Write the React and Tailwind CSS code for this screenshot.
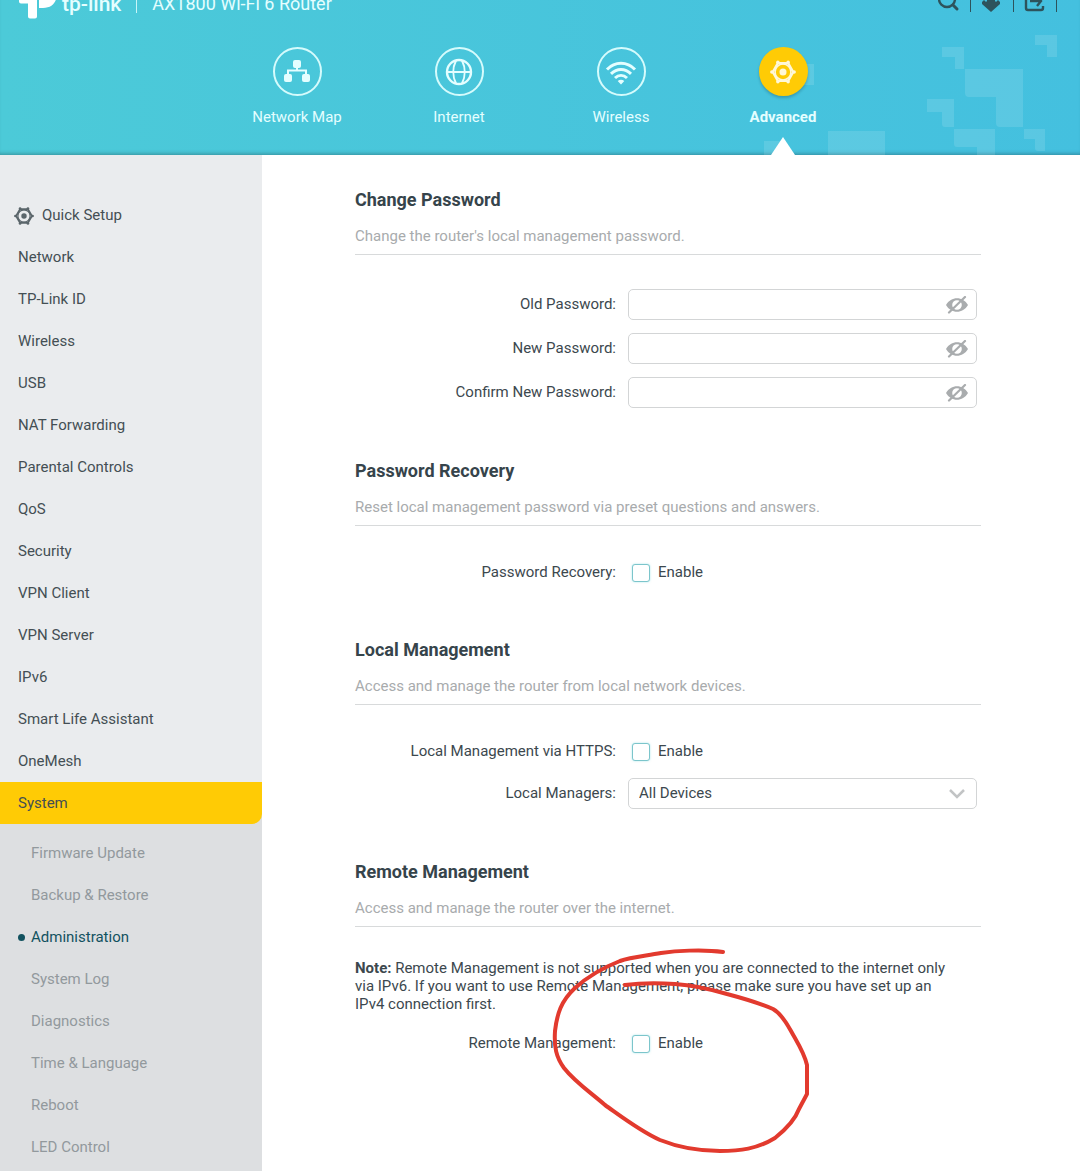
import { useState } from "react";

const menuItems = [
  "Network",
  "TP-Link ID",
  "Wireless",
  "USB",
  "NAT Forwarding",
  "Parental Controls",
  "QoS",
  "Security",
  "VPN Client",
  "VPN Server",
  "IPv6",
  "Smart Life Assistant",
  "OneMesh",
];

const systemItems = [
  "Firmware Update",
  "Backup & Restore",
  "Administration",
  "System Log",
  "Diagnostics",
  "Time & Language",
  "Reboot",
  "LED Control",
];

function GearIcon({ className }) {
  return (
    <svg viewBox="0 0 28 28" className={className} fill="none" stroke="currentColor" aria-hidden="true">
      <path d="M8.500 4.500h11L25 14l-5.500 9.500h-11L3 14z" strokeWidth="2.600" strokeLinejoin="round" />
      <circle cx="14" cy="14" r="8.500" strokeWidth="1.600" />
      <circle cx="14" cy="14" r="3.800" fill="currentColor" stroke="none" />
      <g fill="currentColor" stroke="none">
        <circle cx="8.500" cy="3.500" r="1.900" />
        <circle cx="19.500" cy="3.500" r="1.900" />
        <circle cx="26" cy="14" r="1.900" />
        <circle cx="19.500" cy="24.500" r="1.900" />
        <circle cx="8.500" cy="24.500" r="1.900" />
        <circle cx="2" cy="14" r="1.900" />
      </g>
    </svg>
  );
}

function NetworkMapIcon() {
  return (
    <svg viewBox="0 0 28 28" className="h-7 w-7" fill="currentColor" aria-hidden="true">
      <rect x="10" y="2" width="8" height="8" rx="2" />
      <rect x="1" y="16" width="8" height="8" rx="2" />
      <rect x="19" y="16" width="8" height="8" rx="2" />
      <path d="M14 9v3.500M5 17v-4.500h18V17" fill="none" stroke="currentColor" strokeWidth="2" />
    </svg>
  );
}

function GlobeIcon() {
  return (
    <svg viewBox="0 0 28 28" className="h-7 w-7" fill="none" stroke="currentColor" strokeWidth="2" aria-hidden="true">
      <circle cx="14" cy="14" r="12" strokeWidth="2.400" />
      <path d="M2 14h24M11 2.500c-3.500 7-3.500 16 0 23M17 2.500c3.500 7 3.500 16 0 23" />
    </svg>
  );
}

function WifiIcon() {
  return (
    <svg viewBox="0 0 32 28" className="h-7 w-8" fill="none" stroke="currentColor" strokeWidth="3" aria-hidden="true">
      <path d="M2 11.500C10 3.300 22 3.300 30 11.500" />
      <path d="M6 15.800C12 10 20 10 26 15.800" />
      <path d="M10 20c3.600-3.400 8.400-3.400 12 0" />
      <path d="M16 26.500l-3.300-3.600c2-1.500 4.600-1.500 6.600 0z" fill="currentColor" stroke="none" />
    </svg>
  );
}

function EyeOffIcon() {
  return (
    <svg viewBox="0 0 22 18" className="h-[18px] w-[22px]" fill="none" stroke="currentColor" aria-hidden="true">
      <path
        d="M0 9C5 0 17 0 22 9C17 18 5 18 0 9zM11 4.200a4.800 4.800 0 1 0 0 9.600a4.800 4.800 0 1 0 0-9.600z"
        fill="currentColor"
        fillRule="evenodd"
        stroke="none"
      />
      <path d="M3 16.500L19 1" strokeWidth="2.200" strokeLinecap="round" />
    </svg>
  );
}

const tabs = [
  { name: "Network Map", icon: <NetworkMapIcon /> },
  { name: "Internet", icon: <GlobeIcon /> },
  { name: "Wireless", icon: <WifiIcon /> },
  { name: "Advanced", icon: <GearIcon className="h-[26px] w-[26px]" /> },
];

function Header({ activeTab, setActiveTab }) {
  return (
    <header className="relative overflow-hidden bg-linear-to-r from-[#4ccad8] to-[#44c0df] font-[Roboto] text-[#e4feff] shadow-[inset_0_-4px_4px_-3px_rgba(0,0,0,0.3)]">
      <svg
        viewBox="0 0 320 120"
        className="absolute right-0 bottom-0 h-[120px] w-[320px]"
        fill="#ffffff"
        fillOpacity="0.12"
        aria-hidden="true"
      >
        <path d="M44 29h10v21H44zM4 106h20v14H4zM68 96h57v24H68z" />
        <path d="M182 12h22v22h-9V22h-13zM275 0h22v22h-10V10h-12z" />
        <path d="M205 34h58v58h-23q-4 0-4-4V62h-27q-4 0-4-4z" />
        <path d="M167 64h27v28h-9q-3 0-3-3V77h-15z" />
        <path d="M194 94h41v26h-18v-8h-20q-3 0-3-3zM264 94h21v22h-7q-3 0-3-3v-9h-11z" />
      </svg>

      <div className="relative -mt-4 flex h-10 items-center justify-between pr-[23px] pl-[18px]">
        <div className="flex items-center">
          <svg viewBox="0 0 38 40" className="h-10 w-[38px]" fill="#ffffff" aria-hidden="true">
            <path d="M1 12h9V6q0-6 6-6h9c18 0 18 24 0 24h-4v-8h-2v16.500q0 2-2 2h-5q-2 0-2-2V19.500H3q-2 0-2-2z" />
          </svg>
          <span className="ml-1.5 text-[21px] leading-6 font-medium">tp-link</span>
          <span className="mx-[15px] h-[18px] w-px bg-[#c8f5f8]" />
          <span className="text-[18px] leading-6">AX1800 Wi-Fi 6 Router</span>
        </div>
        <div className="flex items-center gap-[10px] text-[#2d535c]">
          <button type="button" aria-label="Search">
            <svg viewBox="0 0 22 24" className="h-6 w-[22px]" fill="none" stroke="currentColor" strokeWidth="2.400">
              <circle cx="9" cy="7" r="8" />
              <path d="M15 13l4 4" strokeWidth="3" strokeLinecap="round" />
            </svg>
          </button>
          <span className="h-4 w-px bg-[#2d535c]" />
          <button type="button" aria-label="Update">
            <svg viewBox="0 0 22 24" className="h-6 w-[22px]" fill="currentColor">
              <path d="M6 2h8v7l1 1 2-2 2 2v2l-9 8-9-8v-2l2-2 2 2 1-1z" />
            </svg>
          </button>
          <span className="h-4 w-px bg-[#2d535c]" />
          <button type="button" aria-label="Log Out">
            <svg viewBox="0 0 22 24" className="h-6 w-[22px]" fill="none" stroke="currentColor" strokeWidth="2.400">
              <path d="M14 1H5Q2 1 2 4v12q0 2 2 2h13q2 0 2-2v-2" />
              <path d="M6 9h11M13 4l4 5-4 5" />
            </svg>
          </button>
          <span className="h-4 w-px bg-[#2d535c]" />
        </div>
      </div>

      <nav className="relative mx-auto mt-[23px] flex max-w-[648px]">
        {tabs.map((tab) => {
          const active = tab.name === activeTab;
          return (
            <button
              key={tab.name}
              type="button"
              onClick={() => setActiveTab(tab.name)}
              className="flex flex-1 flex-col items-center"
            >
              <span
                className={
                  active
                    ? "flex h-[49px] w-[49px] items-center justify-center rounded-full bg-[#ffcb05] text-[#fff8d8] shadow-[0_2px_3px_rgba(0,0,0,0.2)]"
                    : "flex h-[49px] w-[49px] items-center justify-center rounded-full border-2 border-[#d5fbfc]"
                }
              >
                {tab.icon}
              </span>
              <span className={active ? "mt-[11px] text-[15px] leading-5 font-bold" : "mt-[11px] text-[15px] leading-5"}>
                {tab.name}
              </span>
              <svg
                viewBox="0 0 24 18"
                className={active ? "mt-[10px] h-[18px] w-6" : "invisible mt-[10px] h-[18px] w-6"}
                fill="#ffffff"
                aria-hidden="true"
              >
                <path d="M12 0l12 18H0z" />
              </svg>
            </button>
          );
        })}
      </nav>
    </header>
  );
}

function Sidebar({ page, setPage }) {
  return (
    <aside className="flex w-[262px] shrink-0 flex-col bg-[#eaecee] pt-10 text-[15px] text-[#444f54]">
      <a href="#quick-setup" className="flex h-[41px] items-center gap-2 pl-[14px]">
        <GearIcon className="h-5 w-5 text-[#5b666b]" />
        Quick Setup
      </a>
      {menuItems.map((item) => (
        <a key={item} href="#menu" className="flex h-[42px] items-center pl-[18px]">
          {item}
        </a>
      ))}
      <div className="flex-1 bg-[#dddfe1]">
        <a href="#system" className="flex h-[42px] items-center rounded-br-[10px] bg-[#ffcb05] pl-[18px]">
          System
        </a>
        <div className="pt-2">
          {systemItems.map((item) => (
            <a
              key={item}
              href="#system"
              onClick={() => setPage(item)}
              className={
                item === page
                  ? "flex h-[42px] items-center pl-[18px] text-[#12525f]"
                  : "flex h-[42px] items-center pl-[31px] text-[#92999d]"
              }
            >
              {item === page && <span className="mr-1.5 h-[7px] w-[7px] rounded-full bg-[#12525f]" />}
              {item}
            </a>
          ))}
        </div>
      </div>
    </aside>
  );
}

function Section({ title, description, children }) {
  return (
    <section className="relative">
      <h2 className="text-[18px] leading-6 font-bold text-[#36444b]">{title}</h2>
      <p className="mt-[14px] border-b border-[#d8dadb] pb-2 text-[15px] leading-5 text-[#a8abad]">{description}</p>
      <div className="mt-8">{children}</div>
    </section>
  );
}

function PasswordField({ id, label }) {
  const [visible, setVisible] = useState(false);

  return (
    <div className="flex items-center gap-3 pr-1">
      <label htmlFor={id} className="w-[261px] shrink-0 text-right">
        {label}
      </label>
      <div className="flex h-[31px] flex-1 items-center rounded-[5px] border border-[#d3d5d6] pr-2">
        <input
          id={id}
          type={visible ? "text" : "password"}
          className="h-full min-w-0 flex-1 bg-transparent px-2.5 outline-none"
        />
        <button
          type="button"
          aria-label={visible ? "Hide password" : "Show password"}
          onClick={() => setVisible(!visible)}
          className="text-[#a9acae]"
        >
          <EyeOffIcon />
        </button>
      </div>
    </div>
  );
}

function EnableField({ id, label }) {
  return (
    <div className="flex h-[29px] items-center">
      <span id={`${id}-label`} className="w-[261px] shrink-0 text-right">
        {label}
      </span>
      <label htmlFor={id} className="ml-4 flex items-center gap-2">
        <input
          id={id}
          type="checkbox"
          aria-describedby={`${id}-label`}
          className="h-[18px] w-[18px] appearance-none rounded-[3px] border border-[#7cc5cb] bg-white shadow-[0_0_2px_rgba(74,203,214,0.5)] checked:bg-[#4acbd6]"
        />
        Enable
      </label>
    </div>
  );
}

function App() {
  const [activeTab, setActiveTab] = useState("Advanced");
  const [page, setPage] = useState("Administration");

  return (
    <div className="flex min-h-screen flex-col bg-white font-[Roboto,sans-serif] text-[15px] text-[#3c484e]">
      <Header activeTab={activeTab} setActiveTab={setActiveTab} />
      <div className="flex flex-1">
        <Sidebar page={page} setPage={setPage} />
        <main className="flex min-w-0 flex-1 flex-col gap-[51px] pt-[33px] pr-[99px] pl-[93px]">
          <Section title="Change Password" description="Change the router's local management password.">
            <div className="flex flex-col gap-[13px] pt-0.5">
              <PasswordField id="old-password" label="Old Password:" />
              <PasswordField id="new-password" label="New Password:" />
              <PasswordField id="confirm-password" label="Confirm New Password:" />
            </div>
          </Section>

          <Section
            title="Password Recovery"
            description="Reset local management password via preset questions and answers."
          >
            <EnableField id="recovery" label="Password Recovery:" />
          </Section>

          <Section title="Local Management" description="Access and manage the router from local network devices.">
            <EnableField id="https" label="Local Management via HTTPS:" />
            <div className="mt-3 flex items-center gap-3 pr-1">
              <label htmlFor="managers" className="w-[261px] shrink-0 text-right">
                Local Managers:
              </label>
              <div className="relative flex-1">
                <select
                  id="managers"
                  className="block h-[31px] w-full appearance-none rounded-[5px] border border-[#d3d5d6] bg-white px-2.5"
                >
                  <option>All Devices</option>
                  <option>Specified Devices</option>
                </select>
                <svg
                  viewBox="0 0 16 10"
                  className="pointer-events-none absolute top-[11px] right-3 h-[10px] w-4"
                  fill="none"
                  stroke="#c2c4c5"
                  strokeWidth="2.500"
                  aria-hidden="true"
                >
                  <path d="M1 1l7 7 7-7" />
                </svg>
              </div>
            </div>
          </Section>

          <Section title="Remote Management" description="Access and manage the router over the internet.">
            <p className="mb-4 pr-5 leading-[18px]">
              <strong className="font-bold">Note:</strong> Remote Management is not supported when you are connected to
              the internet only via IPv6. If you want to use Remote Management, please make sure you have set up an IPv4
              connection first.
            </p>
            <EnableField id="remote" label="Remote Management:" />
            <svg
              viewBox="550 945 262 212"
              className="pointer-events-none absolute top-[84px] left-[195px] h-[212px] w-[262px]"
              fill="none"
              stroke="#e23a2e"
              strokeWidth="4"
              strokeLinecap="round"
              strokeLinejoin="round"
              aria-hidden="true"
            >
              <path d="M723 953C702 950 675 952 661 954C645 957 631 958 620 962C602 969 585 980 575 989C561 1002 557 1015 555 1032C554 1048 556 1058 564 1069C575 1083 590 1093 605 1106C622 1118 640 1132 660 1141C680 1149 700 1152 720 1152C740 1152 757 1150 775 1139C785 1131 795 1121 799 1110L807 1095V1066C804 1053 797 1043 791 1032C785 1021 780 1014 773 1010C757 1003 742 999 727 995C710 990 690 986 675 985C660 984 640 984 625 986" />
            </svg>
          </Section>
        </main>
      </div>
    </div>
  );
}

export default App;
